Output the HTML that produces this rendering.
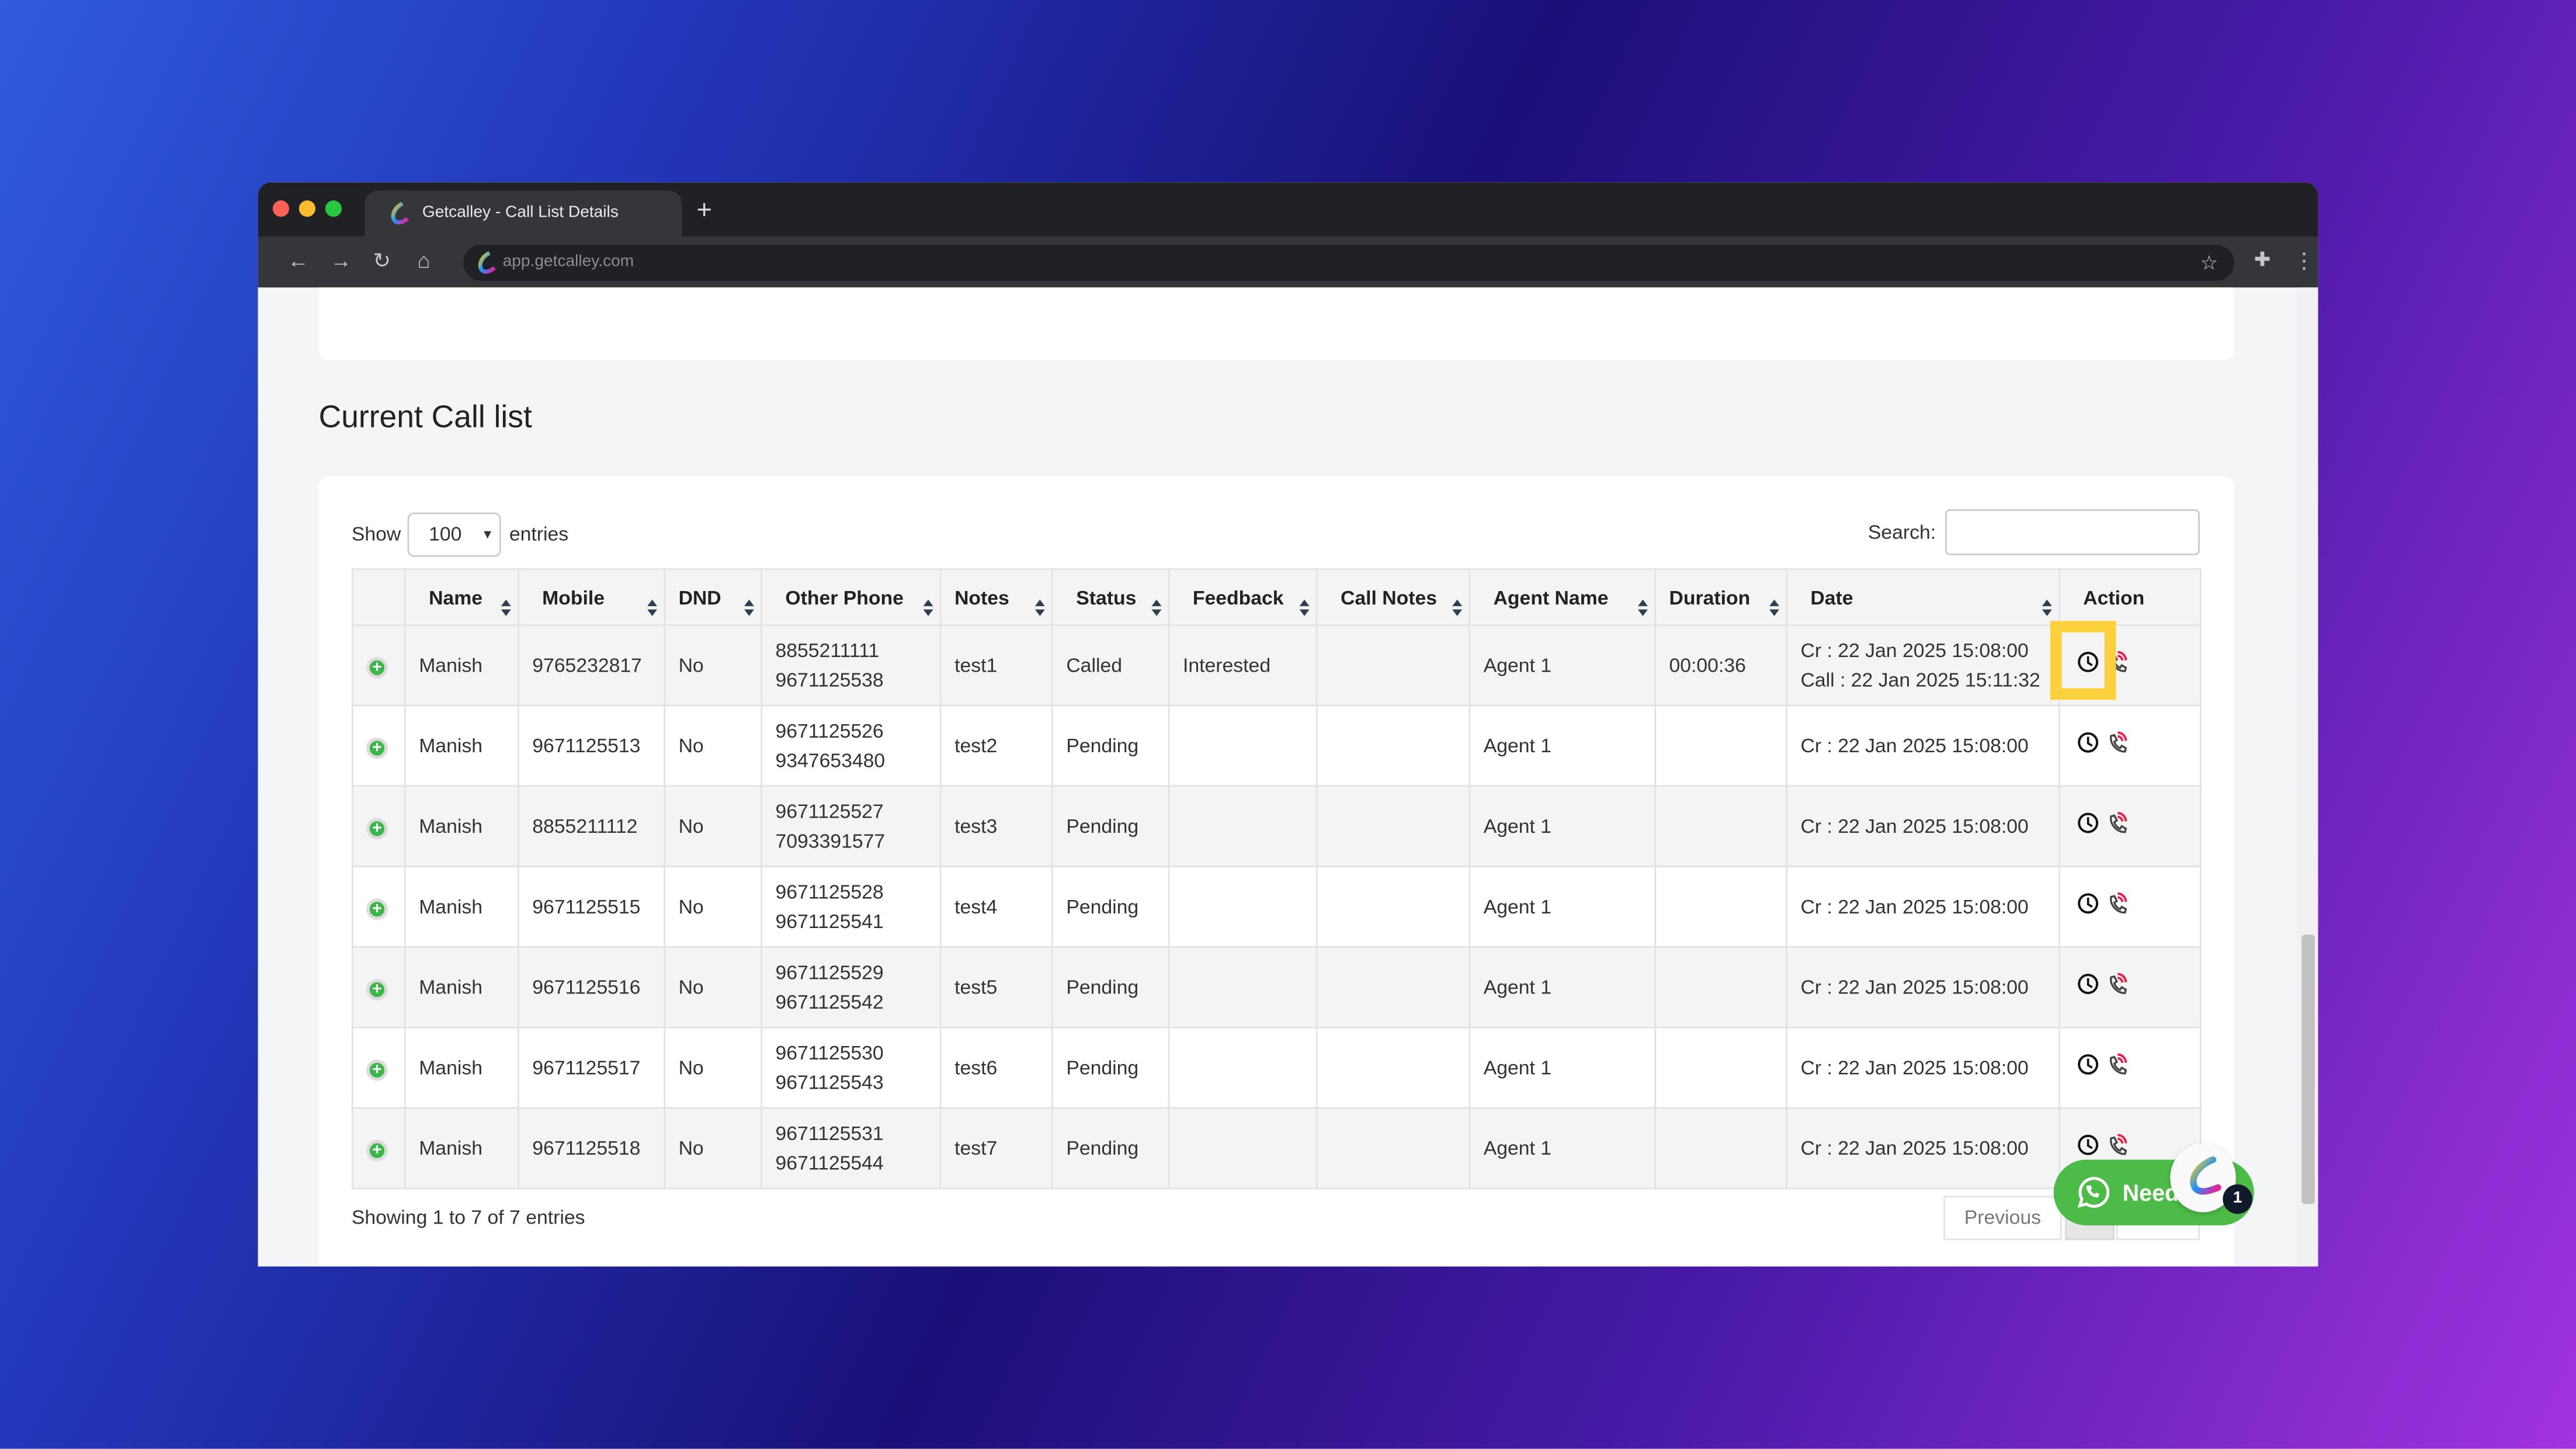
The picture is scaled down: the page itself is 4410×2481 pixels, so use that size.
<!DOCTYPE html>
<html><head><meta charset="utf-8"><style>
*{box-sizing:border-box;margin:0;padding:0}
html,body{width:4410px;height:2481px;overflow:hidden}
#w{position:absolute;left:0;top:0;width:1568px;height:882px;transform:scale(2.8125);transform-origin:0 0;background:linear-gradient(115deg,#2f5bdc 0%,#2236b8 22%,#1a1078 48%,#4a1aa8 72%,#a233e0 100%);font-family:"Liberation Sans",sans-serif;overflow:hidden}
.abs{position:absolute}
#win{left:157px;top:111px;width:1254px;height:660px;border-radius:8px 8px 0 0;overflow:hidden;background:#f4f5f7}
#tabs{left:0;top:0;width:1254px;height:33px;background:#202124}
#tab{left:65px;top:5px;width:193px;height:28px;background:#35363a;border-radius:8px 8px 0 0;color:#e8eaed;font-size:10px;line-height:28px;padding-left:35px}
#tool{left:0;top:33px;width:1254px;height:31px;background:#35363a}
#addr{left:125px;top:5px;width:1078px;height:22px;background:#202124;border-radius:11px;color:#8a8d91;font-size:10px;line-height:22px;padding-left:24px}
.dot{width:10px;height:10px;border-radius:50%;top:11px}
.ic{color:#c4c7c9;font-size:13px;top:7px}
table{border-collapse:collapse;font-size:12px;color:#333;table-layout:fixed}
td,th{border:1px solid #e2e2e2;padding:0 8px;text-align:left;white-space:nowrap;position:relative}
th{height:34px;font-weight:bold;color:#222;background:#f4f4f4}
td{height:49px;line-height:18px}
tr.g td{background:#f4f4f4}
.s:after{content:"";position:absolute;right:4px;top:18px;width:0;height:0;border-left:3px solid transparent;border-right:3px solid transparent;border-bottom:4px solid #2c3e50}
.s:before{content:"";position:absolute;right:4px;top:24px;width:0;height:0;border-left:3px solid transparent;border-right:3px solid transparent;border-top:4px solid #2c3e50}
.pl{display:inline-block;width:13px;height:13px;border-radius:50%;background:#3cb54a;border:2px solid #dcdcdc;color:#fff;font-size:10px;line-height:9px;text-align:center;font-weight:bold}
</style></head><body><div id="w">
<div id="win" class="abs">
 <div id="tabs" class="abs">
  <div class="abs dot" style="left:9px;background:#fe5f57"></div>
  <div class="abs dot" style="left:25px;background:#febc2e"></div>
  <div class="abs dot" style="left:41px;background:#28c840"></div>
  <div id="tab" class="abs"><svg class="abs" style="left:14px;top:7px" width="14" height="14" viewBox="0 0 14 14"><path d="M9 1 C3 4 2 10 5 12 C7 13 10 12 12 10" fill="none" stroke="url(#g1)" stroke-width="2.5"/><defs><linearGradient id="g1" x1="0" y1="0" x2="1" y2="1"><stop offset="0" stop-color="#ffd400"/><stop offset=".5" stop-color="#1e90ff"/><stop offset="1" stop-color="#ff1493"/></linearGradient></defs></svg>Getcalley - Call List Details</div>
  <div class="abs" style="left:267px;top:9px;color:#ddd;font-size:16px">+</div>
 </div>
 <div id="tool" class="abs">
  <div class="abs ic" style="left:18px">←</div><div class="abs ic" style="left:44px">→</div><div class="abs ic" style="left:70px">↻</div><div class="abs ic" style="left:97px">⌂</div>
  <div id="addr" class="abs"><svg class="abs" style="left:7px;top:4px" width="14" height="14" viewBox="0 0 14 14"><path d="M9 1 C3 4 2 10 5 12 C7 13 10 12 12 10" fill="none" stroke="url(#g1)" stroke-width="2.5"/></svg>app.getcalley.com<span class="abs" style="right:10px;top:0;color:#ccc;font-size:12px">☆</span></div>
  <div class="abs ic" style="left:1215px;font-size:12px">✚</div><div class="abs ic" style="left:1239px">⋮</div>
 </div>
 <div class="abs" style="left:1241px;top:64px;width:13px;height:596px;background:#f1f1f1"></div>
 <div class="abs" style="left:1244px;top:458px;width:8px;height:164px;background:#c1c1c1;border-radius:2px"></div>
 <div class="abs" style="left:37px;top:64px;width:1166px;height:44px;background:#fff;border-radius:0 0 6px 6px"></div>
 <div class="abs" style="left:37px;top:133px;font-size:19px;color:#222">Current Call list</div>
 <div class="abs" style="left:37px;top:179px;width:1166px;height:500px;background:#fff;border-radius:6px"></div>
 <div class="abs" style="left:57px;top:207px;font-size:12px;color:#333">Show</div>
 <div class="abs" style="left:91px;top:201px;width:57px;height:27px;border:1px solid #ccc;border-radius:4px;font-size:12px;line-height:25px;padding-left:12px;color:#333">100 <span style="position:absolute;right:5px;font-size:9px">▾</span></div>
 <div class="abs" style="left:153px;top:207px;font-size:12px;color:#333">entries</div>
 <div class="abs" style="left:980px;top:206px;font-size:12px;color:#333">Search:</div>
 <div class="abs" style="left:1027px;top:199px;width:155px;height:28px;border:1px solid #ccc;border-radius:3px"></div>
 <table class="abs" style="left:57px;top:235px;width:1125px">
 <colgroup><col style="width:32px"><col style="width:69px"><col style="width:89px"><col style="width:59px"><col style="width:109px"><col style="width:68px"><col style="width:71px"><col style="width:90px"><col style="width:93px"><col style="width:113px"><col style="width:80px"><col style="width:166px"><col style="width:86px"></colgroup>
 <tr><th></th><th class="s" style="padding-left:14px">Name</th><th class="s" style="padding-left:14px">Mobile</th><th class="s">DND</th><th class="s" style="padding-left:14px">Other Phone</th><th class="s">Notes</th><th class="s" style="padding-left:14px">Status</th><th class="s" style="padding-left:14px">Feedback</th><th class="s" style="padding-left:14px">Call Notes</th><th class="s" style="padding-left:14px">Agent Name</th><th class="s">Duration</th><th class="s" style="padding-left:14px">Date</th><th style="padding-left:14px">Action</th></tr>
 <tr class="g"><td><span class="pl">+</span></td><td>Manish</td><td>9765232817</td><td>No</td><td>8855211111<br>9671125538</td><td>test1</td><td>Called</td><td>Interested</td><td></td><td>Agent 1</td><td>00:00:36</td><td>Cr : 22 Jan 2025 15:08:00<br>Call : 22 Jan 2025 15:11:32</td><td class="a"></td></tr>
 <tr><td><span class="pl">+</span></td><td>Manish</td><td>9671125513</td><td>No</td><td>9671125526<br>9347653480</td><td>test2</td><td>Pending</td><td></td><td></td><td>Agent 1</td><td></td><td>Cr : 22 Jan 2025 15:08:00</td><td class="a"></td></tr>
 <tr class="g"><td><span class="pl">+</span></td><td>Manish</td><td>8855211112</td><td>No</td><td>9671125527<br>7093391577</td><td>test3</td><td>Pending</td><td></td><td></td><td>Agent 1</td><td></td><td>Cr : 22 Jan 2025 15:08:00</td><td class="a"></td></tr>
 <tr><td><span class="pl">+</span></td><td>Manish</td><td>9671125515</td><td>No</td><td>9671125528<br>9671125541</td><td>test4</td><td>Pending</td><td></td><td></td><td>Agent 1</td><td></td><td>Cr : 22 Jan 2025 15:08:00</td><td class="a"></td></tr>
 <tr class="g"><td><span class="pl">+</span></td><td>Manish</td><td>9671125516</td><td>No</td><td>9671125529<br>9671125542</td><td>test5</td><td>Pending</td><td></td><td></td><td>Agent 1</td><td></td><td>Cr : 22 Jan 2025 15:08:00</td><td class="a"></td></tr>
 <tr><td><span class="pl">+</span></td><td>Manish</td><td>9671125517</td><td>No</td><td>9671125530<br>9671125543</td><td>test6</td><td>Pending</td><td></td><td></td><td>Agent 1</td><td></td><td>Cr : 22 Jan 2025 15:08:00</td><td class="a"></td></tr>
 <tr class="g"><td><span class="pl">+</span></td><td>Manish</td><td>9671125518</td><td>No</td><td>9671125531<br>9671125544</td><td>test7</td><td>Pending</td><td></td><td></td><td>Agent 1</td><td></td><td>Cr : 22 Jan 2025 15:08:00</td><td class="a"></td></tr>
 </table>
 <svg class="abs" style="left:1107px;top:280px" width="40" height="320" viewBox="0 0 40 320">
  <defs><g id="ai"><circle cx="7" cy="7" r="5.5" fill="none" stroke="#111" stroke-width="1.4"/><path d="M7 3.5V7.5L9.5 9" fill="none" stroke="#111" stroke-width="1.3"/><path d="M21 3 L23 2.5 L24.5 5.5 L23 6.5 C23.5 8.5 25 10 26.5 10.5 L27.5 9 L30 10.5 L29.5 12.5 C25 13 20 8 21 3Z" fill="none" stroke="#444" stroke-width="1.2"/><path d="M25 1a5 5 0 0 1 5 5M25 3.3a2.8 2.8 0 0 1 2.8 2.8" fill="none" stroke="#e8214a" stroke-width="1.4"/></g></defs>
  <use href="#ai" y="5"/><use href="#ai" y="54"/><use href="#ai" y="103"/><use href="#ai" y="152"/><use href="#ai" y="201"/><use href="#ai" y="250"/><use href="#ai" y="299"/>
 </svg>
 <div class="abs" style="left:1091px;top:267px;width:40px;height:48px;border:7px solid #fdd13d"></div>
 <div class="abs" style="left:57px;top:623px;font-size:12px;color:#333">Showing 1 to 7 of 7 entries</div>
 <div class="abs" style="left:1026px;top:617px;width:72px;height:27px;border:1px solid #e4e4e4;font-size:12px;line-height:25px;text-align:center;color:#777">Previous</div>
 <div class="abs" style="left:1100px;top:617px;width:30px;height:27px;background:#e6e6e6;border:1px solid #d6d6d6"></div>
 <div class="abs" style="left:1131px;top:617px;width:51px;height:27px;border:1px solid #e4e4e4"></div>
 <div class="abs" style="left:1093px;top:595px;width:122px;height:40px;border-radius:20px;background:#4cbb47;color:#fff;font-weight:bold;font-size:14px;line-height:40px;padding-left:42px">Need</div>
 <svg class="abs" style="left:1105px;top:604px" width="22" height="22" viewBox="0 0 22 22"><path d="M4 19l1.2-4A8.5 8.5 0 1 1 8 18z" fill="none" stroke="#fff" stroke-width="1.8"/><path d="M8 7c0 4 3 7 7 7l1-2-2-1-1 1c-1-.5-2-1.5-2.5-2.5l1-1-1-2z" fill="#fff"/></svg>
 <div class="abs" style="left:1164px;top:585px;width:40px;height:42px;border-radius:50%;background:#fafafa;box-shadow:0 1px 3px rgba(0,0,0,.2)"></div>
 <svg class="abs" style="left:1172px;top:593px" width="24" height="26" viewBox="0 0 24 26"><defs><linearGradient id="g2" x1="0" y1="0" x2="1" y2="1"><stop offset="0" stop-color="#ffd400"/><stop offset=".5" stop-color="#1e90ff"/><stop offset="1" stop-color="#ff1493"/></linearGradient></defs><path d="M18 2 C8 6 4 14 7 19 C10 23 16 21 21 19" fill="none" stroke="url(#g2)" stroke-width="4" stroke-linecap="round"/></svg>
 <div class="abs" style="left:1196px;top:610px;width:18px;height:18px;border-radius:50%;background:#111a2b;color:#fff;font-size:10px;font-weight:bold;line-height:18px;text-align:center">1</div>
</div>
</div></body></html>
